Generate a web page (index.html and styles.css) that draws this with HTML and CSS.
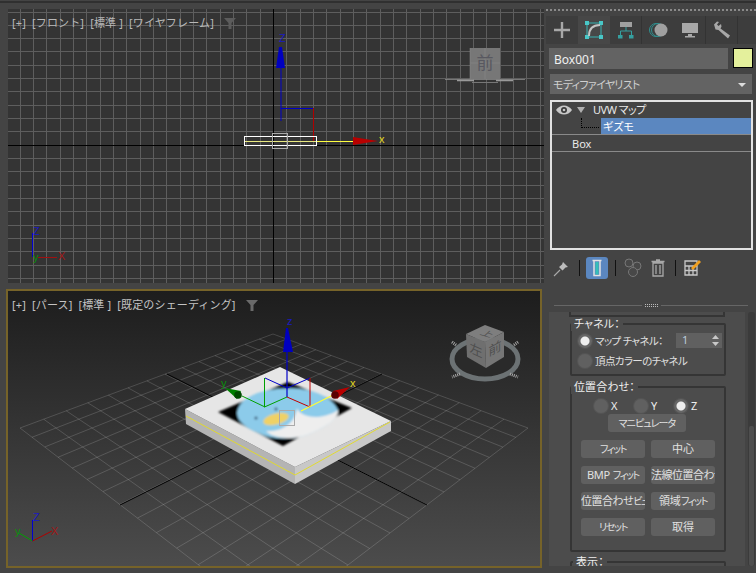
FILE: index.html
```html
<!DOCTYPE html>
<html lang="ja">
<head>
<meta charset="utf-8">
<title>UVW マップ</title>
<link rel="stylesheet" href="styles.css">
</head>
<body>
<div class="titleline"></div>
<div class="app">
  <main class="viewports">
    <section class="viewport viewport-front">
      <svg class="scene" viewBox="8 9 536 274" width="536" height="274">
        <g id="front-grid" shape-rendering="crispEdges"></g>
        <g fill="none">
          <path d="M281 68V121" stroke="#0000c8"/>
          <path d="M281 108.5H313" stroke="#0000c8"/>
          <path d="M313.5 108V141" stroke="#b00000"/>
          <path d="M317 141.5H354" stroke="#ffff40"/>
          <path d="M245 141.5H317" stroke="#e8e880"/>
          <rect x="244.5" y="136.5" width="72" height="9" stroke="#fff"/>
          <rect x="272.5" y="133.5" width="15" height="15" stroke="#aaa"/>
        </g>
        <polygon points="279,47 282,47 285,68 276,68" fill="#0000c0"/>
        <polygon points="353,137 365,139 378,141 365,143 353,145" fill="#b80000"/>
        <text class="axis axis-z" x="279" y="42">Z</text>
        <text class="axis axis-yellow" x="379" y="143">x</text>
        <g fill="none">
          <path d="M32.5 233V257" stroke="#0000d0"/>
          <path d="M37 257.5H57" stroke="#a01010"/>
        </g>
        <text class="axis axis-z" x="33" y="235">Z</text>
        <text class="axis axis-red" x="58" y="260">X</text>
        <text class="axis axis-green" x="33" y="261">y</text>
        <rect x="470" y="48" width="30" height="31" fill="#777"/>
        <path d="M470 48V79M485 48V79M470 63H500" stroke="#8a8a8a" stroke-width="1" opacity=".5"/>
        <text class="cube-face" x="485" y="69">前</text>
        <path d="M445 79.500H525" stroke="#8a8a8a" stroke-width=".8" fill="none"/>
        <path d="M457 80.500H474M496 80.500H513" stroke="#9a9a9a" stroke-width="1.500" fill="none"/>
        <path d="M472 82.500H498" stroke="#777" stroke-width="1" fill="none"/>
      </svg>
      <div class="vp-label">
        <span>[+]</span><span>[フロント]</span><span>[標準 ]</span><span>[ワイヤフレーム]</span>
        <svg class="vp-filter" viewBox="0 0 14 13" width="14" height="13"><path d="M1 1H13L8.5 6V12H5.5V6Z" fill="#5c5c5c"/></svg>
      </div>
    </section>

    <section class="viewport viewport-persp">
      <svg class="scene" viewBox="8 291 532 275" width="532" height="275">
        <defs>
          <filter id="soft" x="-10%" y="-10%" width="120%" height="120%"><feGaussianBlur stdDeviation="0.9"/></filter>
        </defs>
        <g id="persp-grid" fill="none" stroke="rgba(255,255,255,.2)" stroke-width=".8"></g>
        <path d="M120 505L382 374M167 374L427 505" stroke="#000" fill="none"/>
        <polygon points="185,409 295,467 295,484 186,424" fill="#b4b4b4"/>
        <polygon points="295,467 391,421 391,431 295,484" fill="#c8c8c8"/>
        <polygon points="280,367 185,409 295,467 391,421" fill="#e6e6e6"/>
        <path d="M186 416L295 475L390 422" fill="none" stroke="#e4dc20" stroke-width=".9"/>
        <g filter="url(#soft)">
          <polygon points="218,412 288,382 352,408 283,446" fill="#000"/>
          <path d="M237 413C238 402 250 392 277 389C300 386 330 392 338 410C339 420 322 429 307 435C295 439 275 440 263 435C250 430 237 423 237 413Z" fill="#8ccbea"/>
          <path d="M297 408C300 418 322 421 338 410C339 420 322 429 307 435C295 439 275 440 266 431C280 432 295 425 297 408Z" fill="#eee"/>
          <ellipse cx="276" cy="419" rx="13" ry="5.5" transform="rotate(-14 276 419)" fill="#efd166"/>
          <circle cx="256" cy="418" r="1.6" fill="#40607a"/>
          <circle cx="276" cy="409" r="1.6" fill="#40607a"/>
        </g>
        <g fill="none">
          <path d="M287 352V397" stroke="#0000c8" stroke-width="1.2"/>
          <path d="M265 378L287 388L310 378" stroke="#0000c8"/>
          <path d="M264.500 378V407L287 397" stroke="#00a000"/>
          <path d="M265 407L242 396" stroke="#00a000"/>
          <path d="M310 378V407L287 397" stroke="#c00000"/>
          <path d="M301 411L333 395" stroke="#ffff30" stroke-width="1.2"/>
          <rect x="279.500" y="410.500" width="15" height="15" stroke="#aaa"/>
        </g>
        <polygon points="286,328 288,328 293,352 283,352" fill="#0000c0"/>
        <polygon points="225,388 241,391 237,399" fill="#008000"/>
        <circle cx="238" cy="395" r="3.800" fill="#004a00"/>
        <polygon points="350,387 333,391 337,399" fill="#b80000"/>
        <circle cx="335" cy="395" r="3.800" fill="#5a0000"/>
        <text class="axis axis-z" x="287" y="325">z</text>
        <text class="axis axis-green" x="221" y="387">y</text>
        <text class="axis axis-yellow" x="350" y="387">x</text>
        <path d="M32.500 520V541" stroke="#0000d0" fill="none"/>
        <path d="M32.500 541L19 533" stroke="#00a000" fill="none"/>
        <path d="M32.500 541L52 531" stroke="#b00000" fill="none"/>
        <text class="axis axis-z" x="33" y="521">Z</text>
        <text class="axis axis-green" x="15" y="535">y</text>
        <text class="axis axis-red" x="51" y="535">X</text>
        <ellipse cx="485" cy="359" rx="33" ry="20" fill="#2a2a2a" stroke="#6c7274" stroke-width="5"/>
        <path d="M456 345l-4-3M514 345l4-3M460 374l-8 3M510 374l8 3" stroke="#aaa" stroke-width="3" stroke-dasharray="1 1" fill="none"/>
        <polygon points="485,325 504,332 485,342 466,334" fill="#7e7e7e"/>
        <polygon points="466,334 485,342 486,368 467,357" fill="#6f6f6f"/>
        <polygon points="485,342 504,332 504,357 486,368" fill="#767676"/>
        <text class="cube-small" transform="translate(476 355) skewY(24)" x="0" y="0">左</text>
        <text class="cube-small" transform="translate(495 353) skewY(-28)" x="0" y="0">前</text>
        <text class="cube-small" transform="translate(485 336) scale(1 .55) rotate(30)" x="0" y="0">上</text>
      </svg>
      <div class="vp-label">
        <span>[+]</span><span>[パース]</span><span>[標準 ]</span><span>[既定のシェーディング]</span>
        <svg class="vp-filter" viewBox="0 0 14 13" width="14" height="13"><path d="M1 1H13L8.500 6V12H5.500V6Z" fill="#6a6a6a"/></svg>
      </div>
    </section>
  </main>

  <aside class="command">
    <div class="dotted"></div>
    <nav class="tabs">
      <div class="tab">
        <svg viewBox="0 0 16 16" width="16" height="16"><path d="M8 0V16M0 8H16" stroke="#a8a8a8" stroke-width="2.400"/></svg>
      </div>
      <div class="tab tab-active">
        <svg viewBox="0 0 18 18" width="18" height="18"><g fill="none" stroke="#38b4b4" stroke-width="1"><rect x="2" y="2" width="14" height="14"/></g><g fill="#49c7c7"><rect x="0" y="0" width="4" height="4"/><rect x="14" y="0" width="4" height="4"/><rect x="0" y="14" width="4" height="4"/><rect x="14" y="14" width="4" height="4"/></g><path d="M4 15C4 8 8 4 15 4" fill="none" stroke="#c4c4c4" stroke-width="2"/></svg>
      </div>
      <div class="tab tab-sep">
        <svg viewBox="0 0 16 18" width="16" height="18"><rect x="2" y="1" width="12" height="5" fill="#a0a0a0"/><path d="M8 6V10M2.500 14V10H13.500V14" fill="none" stroke="#35a0a0"/><rect x="0" y="14" width="4.500" height="3.500" fill="#35a0a0"/><rect x="11" y="14" width="4.500" height="3.500" fill="#35a0a0"/></svg>
      </div>
      <div class="tab">
        <svg viewBox="0 0 20 16" width="20" height="16"><g fill="none" stroke="#2f9090"><circle cx="8" cy="8" r="6.500"/><circle cx="10" cy="8" r="6.500"/></g><circle cx="13" cy="8" r="6.500" fill="#a0a0a0"/></svg>
      </div>
      <div class="tab tab-sep">
        <svg viewBox="0 0 18 16" width="18" height="16"><rect x="1" y="1" width="16" height="10" fill="#a8a8a8"/><rect x="7" y="12" width="4" height="2" fill="#a8a8a8"/><rect x="4" y="14" width="10" height="1.500" fill="#a8a8a8"/></svg>
      </div>
      <div class="tab tab-sep">
        <svg viewBox="0 0 18 18" width="18" height="18"><path d="M1 3.500L4 .5L6 1L4 3.500L5.500 5L8 3L8.500 5.500L7.500 7.500L17 14.500L15 17.500L5.500 9L2.500 8.500Z" fill="#a8a8a8"/></svg>
      </div>
    </nav>

    <div class="name-row">
      <div class="name-field">Box001</div>
      <div class="swatch"></div>
    </div>
    <div class="modifier-select">
      <span>モディファイヤリスト</span>
      <svg viewBox="0 0 8 6" width="8" height="6"><path d="M0 1H8L4 5Z" fill="#ddd"/></svg>
    </div>

    <div class="stack">
      <div class="stack-row stack-main">
        <svg class="eye" viewBox="0 0 16 10" width="16" height="10"><path d="M0 5C4 -1 12 -1 16 5C12 11 4 11 0 5Z" fill="#c8c8c8"/><circle cx="8" cy="5" r="3" fill="#3a3a3a"/><circle cx="8" cy="5" r="1.300" fill="#c8c8c8"/></svg>
        <svg class="caret" viewBox="0 0 10 8" width="10" height="8"><path d="M1 1H9L5 7Z" fill="#b0b0b0"/></svg>
        <span class="stack-name">UVW マップ</span>
      </div>
      <div class="stack-row stack-sub">
        <div class="tree-link"></div>
        <div class="stack-selected">ギズモ</div>
      </div>
      <div class="stack-row stack-base">Box</div>
    </div>

    <div class="toolbar">
      <div class="tool tool-pin">
        <svg viewBox="0 0 22 22" width="22" height="22"><path d="M4 19L10 13" stroke="#aaa" stroke-width="1.100"/><path d="M13 5L18 10L15.500 10.500L12.500 13.500L9 10L12 7.500Z" fill="#bcbcbc"/></svg>
      </div>
      <div class="bar bar-a"></div>
      <div class="tool tool-active">
        <svg viewBox="0 0 22 22" width="22" height="22"><path d="M6.500 3.500H15.500M8 3.500V18.500H14V3.500" fill="none" stroke="#e2e2e2" stroke-width="1.500"/><rect x="9.500" y="5" width="3" height="12.500" fill="#35c0b8"/></svg>
      </div>
      <div class="bar bar-a"></div>
      <div class="tool tool-gap">
        <svg viewBox="0 0 22 22" width="22" height="22"><g fill="#484848" stroke="#777"><circle cx="7" cy="6" r="4"/><circle cx="15" cy="9" r="4"/><circle cx="11" cy="15" r="4.500"/></g></svg>
      </div>
      <div class="tool tool-trash">
        <svg viewBox="0 0 22 22" width="22" height="22"><path d="M6 6H16V19H6ZM4.500 4.500H17.500M9 3H13M9 8V17M13 8V17" fill="none" stroke="#a8a8a8" stroke-width="1.300"/></svg>
      </div>
      <div class="bar bar-b"></div>
      <div class="tool tool-edit">
        <svg viewBox="0 0 22 22" width="22" height="22"><path d="M4 4H16V18H4ZM4 9H16M4 13.500H16M8 9V18M12 9V18" fill="none" stroke="#c8c8c8" stroke-width="1.300"/><path d="M10 11L18 3L20 5L12 13Z" fill="#f0a020"/></svg>
      </div>
    </div>

    <div class="divider">
      <span class="divider-line"></span>
      <span class="divider-dots"></span>
      <span class="divider-line"></span>
    </div>

    <div class="rollout-wrap">
      <div class="rollout">
        <div class="group-stub"></div>

        <div class="group group-channel">
          <div class="group-title">チャネル：</div>
          <div class="radio-row">
            <span class="radio radio-on"></span><span class="radio-text">マップ チャネル：</span>
            <div class="spinner"><span>1</span>
              <svg viewBox="0 0 7 11" width="7" height="11"><path d="M3.500 0L7 4H0ZM3.500 11L0 7H7Z" fill="#c8c8c8"/></svg>
            </div>
          </div>
          <div class="radio-row">
            <span class="radio"></span><span class="radio-text">頂点カラーのチャネル</span>
          </div>
        </div>

        <div class="group group-align">
          <div class="group-title">位置合わせ：</div>
          <div class="axis-radios">
            <div class="axis-radio"><span class="radio"></span><span>X</span></div>
            <div class="axis-radio"><span class="radio"></span><span>Y</span></div>
            <div class="axis-radio"><span class="radio radio-on"></span><span>Z</span></div>
          </div>
          <div class="btn btn-wide"><span class="kana-mid">マニピュレータ</span></div>
          <div class="btn-grid">
            <div class="btn"><span class="kana">フィット</span></div>
            <div class="btn">中心</div>
            <div class="btn"><span class="latin">BMP</span> <span class="kana">フィット</span></div>
            <div class="btn btn-clip">法線位置合わせ</div>
            <div class="btn btn-clip">位置合わせ<span class="kana">ビュー</span></div>
            <div class="btn">領域<span class="kana">フィット</span></div>
            <div class="btn"><span class="kana">リセット</span></div>
            <div class="btn">取得</div>
          </div>
        </div>

        <div class="group group-display">
          <div class="group-title">表示：</div>
        </div>
      </div>
      <div class="scroll"><div class="scroll-thumb"></div></div>
    </div>
  </aside>
</div>
<script src="script.js"></script>
</body>
</html>
```

FILE: styles.css
```css
* { box-sizing: border-box; }
html, body { margin: 0; padding: 0; }
body {
  width: 756px;
  height: 573px;
  overflow: hidden;
  background: #444;
  color: #d8d8d8;
  font-family: "Noto Sans", "Noto Sans CJK JP", "Liberation Sans", sans-serif;
  font-size: 11px;
  line-height: 16px;
}
.titleline { height: 3px; border-top: 1px solid #444; background: #303030; }
.app { display: flex; height: 570px; }

/* viewports */
.viewports { width: 546px; flex: none; padding-top: 6px; }
.viewport { position: relative; overflow: hidden; }
.viewport-front { width: 536px; height: 274px; margin-left: 8px; background: #343434; }
.viewport-persp {
  width: 536px;
  height: 279px;
  margin: 6px 0 0 6px;
  border: 2px solid #766329;
  background: linear-gradient(#1d1d1d, #4c4c4c);
}
.scene { display: block; }
.vp-label {
  position: absolute;
  left: 4px;
  top: 6px;
  display: flex;
  align-items: center;
  gap: 6px;
  color: #b8b8b8;
  white-space: pre;
  line-height: 16px;
  letter-spacing: .15px;
}
.viewport-persp .vp-label { color: #c4c4c4; }
.vp-filter { margin-left: 3px; }
.axis { font: 11px "Liberation Sans", sans-serif; }
.axis-z { fill: #1a1ac0; }
.axis-red { fill: #a01818; }
.axis-green { fill: #0a900a; }
.axis-yellow { fill: #e0d820; }
.cube-face { font: 17px "Noto Sans CJK JP", sans-serif; fill: #585860; text-anchor: middle; }
.cube-small { font: 13px "Noto Sans CJK JP", sans-serif; fill: #505050; text-anchor: middle; }

/* command panel */
.command { width: 210px; flex: none; font-feature-settings: "palt"; }
.dotted { height: 2px; margin-top: 6px; border-top: 2px dotted #8a8a8a; }
.tabs { display: flex; height: 28px; margin-top: 5px; background: #3d3d3d; }
.tab { width: 32px; display: flex; align-items: center; justify-content: center; }
.tab-active { background: #474747; }
.tab-sep { border-right: 1px solid #333; }
.name-row { display: flex; margin: 4px 0 0 3px; }
.name-field {
  width: 179px;
  height: 21px;
  padding-left: 5px;
  background: #636363;
  color: #f0f0f0;
  font-size: 12px;
  line-height: 24px;
}
.swatch { width: 20px; height: 20px; margin-left: 5px; background: #e4f09c; border: 1px solid #000; }
.modifier-select {
  display: flex;
  justify-content: space-between;
  align-items: center;
  width: 202px;
  height: 20px;
  margin: 5px 0 0 4px;
  padding: 2px 6px 0 3px;
  background: #636363;
  color: #cfcfcf;
  font-size: 11px;
  letter-spacing: -.7px;
}
.stack {
  width: 203px;
  height: 150px;
  margin: 6px 0 0 4px;
  border: 2px solid #e2e2e2;
  background: #444;
}
.stack-row { display: flex; align-items: center; height: 16px; color: #e8e8e8; }
.stack-main .eye { margin-left: 4px; }
.stack-main .caret { margin: 0 7px 0 4px; }
.stack-name { letter-spacing: -.5px; }
.stack-sub { border-bottom: 1px solid #8a8a8a; height: 17px; }
.tree-link {
  align-self: flex-start;
  width: 18px;
  height: 10px;
  margin-left: 29px;
  border-left: 1px dotted #000;
  border-bottom: 1px dotted #000;
}
.stack-selected { flex: 1; height: 16px; margin-left: 2px; padding: 1px 0 0 2px; background: #5b87c0; color: #fff; }
.stack-base { height: 17px; padding: 2px 0 0 20px; border-bottom: 1px solid #8a8a8a; }
.toolbar { display: flex; align-items: center; height: 22px; margin-top: 7px; padding-left: 4px; }
.tool { width: 22px; height: 22px; flex: none; }
.tool svg { display: block; }
.tool-active { margin-left: 6px; background: #5b87c0; border-radius: 3px; }
.tool-gap { margin-left: 6px; }
.tool-trash { margin-left: 3px; }
.tool-edit { margin-left: 5px; }
.bar { width: 1px; height: 16px; background: #111; flex: none; }
.bar-a { margin-left: 7px; }
.bar-b { margin-left: 6px; }
.divider { display: flex; align-items: center; gap: 3px; height: 5px; margin: 24px 0 0 8px; width: 194px; }
.divider-line { flex: 1; height: 1px; background: #666; }
.divider-dots { width: 13px; height: 3px; border-top: 1px dotted #bbb; border-bottom: 1px dotted #bbb; }

.rollout-wrap { display: flex; height: 254px; margin: 4px 0 0 3px; }
.rollout { width: 196px; height: 254px; overflow: hidden; background: #4c4c4c; padding: 0 0 0 21px; }
.scroll { width: 7px; margin-left: 3px; background: #3b3b3b; border-radius: 3px; }
.scroll-thumb { height: 140px; margin: 114px 1px 0; background: #4e4e4e; border-radius: 2px; }
.group-stub { width: 156px; height: 5px; border: 2px solid #353535; border-top: 0; margin-left: -1px; }
.group {
  position: relative;
  width: 156px;
  border: 2px solid #353535;
  border-radius: 2px;
}
.group-title {
  position: absolute;
  left: -1px;
  top: -8px;
  padding: 0 3px;
  background: #4c4c4c;
  color: #eee;
  white-space: nowrap;
  line-height: 14px;
  font-size: 11px;
  letter-spacing: .1px;
}
.group-channel { height: 53px; margin-top: 6px; padding: 6px 0 0 6px; }
.group-align { height: 166px; margin-top: 10px; padding: 10px 9px 0; }
.group-display { height: 30px; margin-top: 9px; }
.group-display .group-title { left: 1px; }
.radio-row { display: flex; align-items: center; gap: 3px; height: 20px; color: #e0e0e0; white-space: nowrap; }
.radio-text { font-size: 10.5px; letter-spacing: -.6px; }
.radio {
  display: inline-block;
  flex: none;
  width: 14px;
  height: 14px;
  border-radius: 50%;
  background: #606060;
  box-shadow: 0 0 0 1px #555;
}
.radio-on { background: radial-gradient(circle, #eee 0 4px, #666 5px); }
.spinner {
  display: flex;
  align-items: center;
  justify-content: space-between;
  width: 46px;
  height: 15px;
  margin: -2px 0 0 auto;
  position: relative;
  left: -2px;
  padding: 0 3px 0 6px;
  background: #606060;
  color: #bcd;
}
.axis-radios { display: flex; height: 16px; padding-left: 13px; }
.axis-radio { display: flex; align-items: center; gap: 3px; width: 40px; color: #eee; }
.btn {
  height: 18px;
  background: #606060;
  border-radius: 3px;
  color: #e0e0e0;
  text-align: center;
  line-height: 18px;
  white-space: nowrap;
  overflow: hidden;
}
.btn-wide { width: 78px; margin: 0 auto; position: relative; left: -1px; }
.btn-grid { display: grid; grid-template-columns: 64px 64px; gap: 8px 6px; margin-top: 8px; }
.btn-clip { text-align: left; letter-spacing: -.5px; }
.kana { font-size: 10px; letter-spacing: -1.3px; }
.kana-mid { font-size: 10px; letter-spacing: -.9px; }
.latin { letter-spacing: -.3px; }
```

FILE: script.js
```js
// Builds the two viewport construction grids.
var NS = "http://www.w3.org/2000/svg";

function addLine(group, x1, y1, x2, y2, color) {
  var line = document.createElementNS(NS, "line");
  line.setAttribute("x1", x1);
  line.setAttribute("y1", y1);
  line.setAttribute("x2", x2);
  line.setAttribute("y2", y2);
  if (color) line.setAttribute("stroke", color);
  group.appendChild(line);
}

// Orthographic grid of the front viewport
(function () {
  var g = document.getElementById("front-grid");
  var step = 13.33, cx = 273.4, cy = 145.3, k, p;
  for (k = -20; k <= 21; k++) {
    p = Math.floor(cx + k * step) + 0.5;
    if (k !== 0 && p > 8 && p < 544) addLine(g, p, 9, p, 283, "#5e5e5e");
    p = Math.floor(cy + k * step) + 0.5;
    if (k !== 0 && p > 9 && p < 283) addLine(g, 8, p, 544, p, "#5e5e5e");
  }
  addLine(g, Math.floor(cx) + 0.5, 9, Math.floor(cx) + 0.5, 283, "#000");
  addLine(g, 8, Math.floor(cy) + 0.5, 544, Math.floor(cy) + 0.5, "#000");
})();

// Perspective grid: projective map from the unit square to the floor quad
(function () {
  var g = document.getElementById("persp-grid");
  var x0 = 20, y0 = 428, x1 = 273, y1 = 334, x2 = 528, y2 = 428, x3 = 273, y3 = 622;
  var dx1 = x1 - x2, dx2 = x3 - x2, sx = x0 - x1 + x2 - x3;
  var dy1 = y1 - y2, dy2 = y3 - y2, sy = y0 - y1 + y2 - y3;
  var d = dx1 * dy2 - dx2 * dy1;
  var gg = (sx * dy2 - dx2 * sy) / d, hh = (dx1 * sy - sx * dy1) / d;
  var a = x1 - x0 + gg * x1, b = x3 - x0 + hh * x3;
  var c = y1 - y0 + gg * y1, e = y3 - y0 + hh * y3;
  function map(u, v) {
    var w = 1 + gg * u + hh * v;
    return [(a * u + b * v + x0) / w, (c * u + e * v + y0) / w];
  }
  var cells = 14;
  for (var i = 0; i <= cells; i++) {
    var t = i / cells;
    var p = map(t, 0), q = map(t, 1);
    addLine(g, p[0], p[1], q[0], q[1]);
    p = map(0, t); q = map(1, t);
    addLine(g, p[0], p[1], q[0], q[1]);
  }
})();
```
